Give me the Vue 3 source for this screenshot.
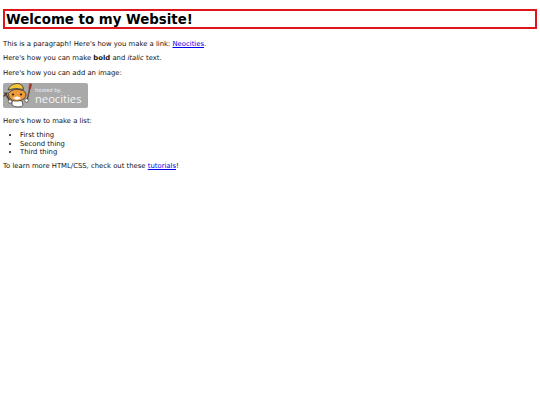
<template>
  <div class="page">
    <h1>Welcome to my Website!</h1>
    <p>This is a paragraph! Here's how you make a link: <a href="#">Neocities</a>.</p>
    <p>Here's how you can make <strong>bold</strong> and <em>italic</em> text.</p>
    <p>Here's how you can add an image:</p>
    <div class="badge">
      <svg class="mascot" width="31" height="25" viewBox="0 0 31 25">
        <path d="M2 10l5 8M1 13l3-3" stroke="#4a4036" stroke-width="1.500" fill="none" stroke-linecap="round" />
        <path d="M27 4l-3 14" stroke="#6a4a32" stroke-width="1.500" fill="none" stroke-linecap="round" />
        <path d="M26.500 0l2.500 1-1 5-2.500-.8z" fill="#a8392f" />
        <path d="M9 18q5-2 10 0l1 4q-1 2-5 2t-6-2z" fill="#fff" stroke="#4a4036" stroke-width="0.800" />
        <path d="M5 11q3-5 10-4.500t8 4.500q0 6-8 7t-10-7z" fill="#ee9a3a" stroke="#4a4036" stroke-width="0.900" />
        <path d="M10 15q4-3 8 0q-4 3.500-8 0z" fill="#fff" />
        <path d="M5 7q2-6 9-6.500q6 0 6.500 6q-8-2.500-15.500.5z" fill="#f3c63a" stroke="#4a4036" stroke-width="0.900" />
        <circle cx="10" cy="11.500" r="1.100" fill="#2b241e" />
        <circle cx="18" cy="11.500" r="1.100" fill="#2b241e" />
        <circle cx="23.500" cy="17.500" r="1.800" fill="#fff" stroke="#4a4036" stroke-width="0.700" />
        <circle cx="7" cy="18.500" r="1.800" fill="#fff" stroke="#4a4036" stroke-width="0.700" />
      </svg>
      <div class="badgeText">
        <div class="hosted">hosted by,</div>
        <div class="brand">neocities</div>
      </div>
    </div>
    <p class="afterBadge">Here's how to make a list:</p>
    <ul>
      <li>First thing</li>
      <li>Second thing</li>
      <li>Third thing</li>
    </ul>
    <p>To learn more HTML/CSS, check out these <a href="#">tutorials</a>!</p>
  </div>
</template>

<script setup>
</script>

<style>
html,
body {
  margin: 0;
  background: #fff;
}
</style>

<style scoped>
.page {
  padding: 9px 3px 0;
  font-family: "DejaVu Sans", sans-serif;
  font-size: 6.850px;
  line-height: 8.500px;
  color: #111;
}

h1 {
  margin: 0 0 10.500px;
  height: 16px;
  border: 2px solid #e0141c;
  padding: 0 1px;
  font-size: 13.350px;
  line-height: 17px;
  font-weight: 700;
  color: #000;
}

p {
  margin: 0 0 6px;
}

a {
  color: #0000ee;
  text-decoration: underline;
}

.badge {
  width: 85px;
  height: 25px;
  display: flex;
  align-items: center;
  background: #a9a9a9;
  border-radius: 2px;
  overflow: hidden;
}

.mascot {
  flex: none;
}

.badgeText {
  margin-left: 1px;
  color: #f4f4f4;
  font-family: "Open Sans", sans-serif;
}

.hosted {
  font-size: 5.500px;
  line-height: 6px;
}

.brand {
  font-size: 11.200px;
  line-height: 12px;
}

.afterBadge {
  margin-top: 8.500px;
}

ul {
  margin: 0 0 5.200px;
  padding-left: 17px;
  list-style: disc;
}
</style>
